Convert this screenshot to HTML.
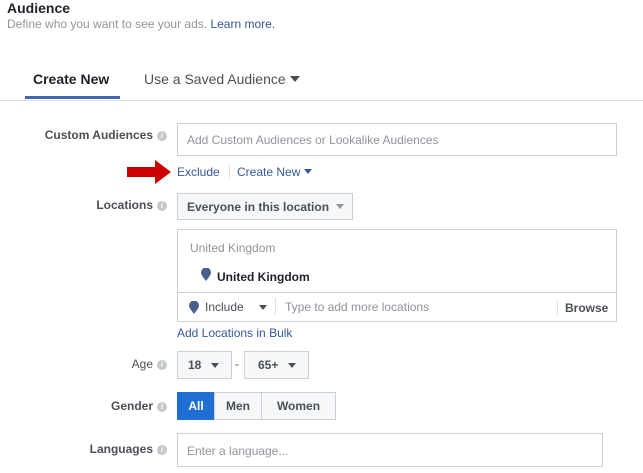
<!DOCTYPE html><html><head><style>
body{margin:0;width:643px;height:473px;background:#fff;font-family:"Liberation Sans",sans-serif;position:relative;overflow:hidden;color:#1d2129}
.a{position:absolute;white-space:nowrap}
.lbl{position:absolute;right:476px;font-size:12px;font-weight:bold;color:#4b4f56}
.i{display:inline-block;width:10px;height:10px;border-radius:50%;background:#c4c7cc;color:#fff;font-size:8px;line-height:10px;text-align:center;vertical-align:1px;margin-left:4px;font-style:italic;font-family:"Liberation Serif",serif;font-weight:bold}
.box{position:absolute;border:1px solid #ccd0d5;box-sizing:border-box;background:#fff}
.btn{position:absolute;border:1px solid #ccd0d5;box-sizing:border-box;background:#f6f7f9;font-size:12px;font-weight:bold;color:#4b4f56;display:flex;align-items:center}
.tri{display:inline-block;width:0;height:0;border-left:4px solid transparent;border-right:4px solid transparent;border-top:5px solid #4b4f56;vertical-align:2px}
.link{color:#365899;font-size:12px}
.ph{color:#90949c;font-size:12px}
</style></head><body>
<div class="a" style="left:7px;top:0px;font-size:14px;font-weight:bold">Audience</div>
<div class="a" style="left:7px;top:17px;font-size:12px;color:#90949c">Define who you want to see your ads. <span class="link">Learn more.</span></div>
<div class="a" style="left:33px;top:71px;font-size:14px;font-weight:bold">Create New</div>
<div class="a" style="left:25px;top:96px;width:95px;height:3px;background:#4267b2"></div>
<div class="a" style="left:144px;top:71px;font-size:14px;color:#4b4f56">Use a Saved Audience <span class="tri" style="border-top-color:#4b4f56;border-left-width:5px;border-right-width:5px;border-top-width:6px"></span></div>
<div class="a" style="left:0;top:100px;width:643px;height:1px;background:#dddfe2"></div>

<div class="lbl" style="top:128px">Custom Audiences<span class="i">i</span></div>
<div class="box" style="left:177px;top:123px;width:440px;height:33px"><span class="a ph" style="left:9px;top:9px">Add Custom Audiences or Lookalike Audiences</span></div>
<svg class="a" style="left:126px;top:159px" width="46" height="26"><path d="M1 8H29V1L45 13L29 25V18H1Z" fill="#c00"/></svg>
<div class="a link" style="left:177px;top:165px">Exclude</div>
<div class="a" style="left:229px;top:165px;width:1px;height:13px;background:#dddfe2"></div>
<div class="a link" style="left:237px;top:165px">Create New <span class="tri" style="border-top-color:#365899"></span></div>

<div class="lbl" style="top:198px">Locations<span class="i">i</span></div>
<div class="btn" style="left:177px;top:193px;width:176px;height:27px;padding-left:9px">Everyone in this location&nbsp;&nbsp;<span class="tri" style="border-top-color:#90949c"></span></div>
<div class="box" style="left:177px;top:229px;width:440px;height:64px">
<span class="a ph" style="left:12px;top:11px">United Kingdom</span>
<svg class="a" style="left:23px;top:38px" width="10" height="13"><path d="M5 13C1 8 0 6 0 4.5A5 5 0 0 1 10 4.5C10 6 9 8 5 13Z" fill="#4b5e8c"/></svg>
<span class="a" style="left:39px;top:40px;font-size:12px;font-weight:bold">United Kingdom</span></div>
<div class="box" style="left:177px;top:292px;width:440px;height:30px">
<svg class="a" style="left:11px;top:8px" width="10" height="13"><path d="M5 13C1 8 0 6 0 4.5A5 5 0 0 1 10 4.5C10 6 9 8 5 13Z" fill="#4b5e8c"/></svg>
<span class="a" style="left:27px;top:7px;font-size:12px;color:#4b4f56">Include</span>
<span class="a" style="left:81px;top:12px;width:0;height:0;border-left:4px solid transparent;border-right:4px solid transparent;border-top:5px solid #4b4f56"></span>
<span class="a" style="left:97px;top:5px;width:1px;height:17px;background:#dddfe2"></span>
<span class="a ph" style="left:107px;top:7px">Type to add more locations</span>
<span class="a" style="left:379px;top:8px;width:1px;height:14px;background:#dddfe2"></span>
<span class="a" style="left:387px;top:8px;font-size:12px;font-weight:bold;color:#4b4f56">Browse</span></div>
<div class="a link" style="left:177px;top:326px">Add Locations in Bulk</div>

<div class="lbl" style="top:357px;font-weight:normal;color:#4b4f56">Age<span class="i">i</span></div>
<div class="btn" style="left:177px;top:351px;width:55px;height:28px;padding-left:10px">18&nbsp;&nbsp;&nbsp;<span class="tri"></span></div>
<div class="a" style="left:235px;top:357px;font-size:12px;color:#4b4f56">-</div>
<div class="btn" style="left:244px;top:351px;width:65px;height:28px;padding-left:13px">65+&nbsp;&nbsp;&nbsp;<span class="tri"></span></div>

<div class="lbl" style="top:399px">Gender<span class="i">i</span></div>
<div class="btn" style="left:177px;top:392px;width:38px;height:28px;background:#1f6ed4;border-color:#1f6ed4;color:#fff;justify-content:center">All</div>
<div class="btn" style="left:214px;top:392px;width:48px;height:28px;justify-content:center">Men</div>
<div class="btn" style="left:261px;top:392px;width:75px;height:28px;justify-content:center">Women</div>

<div class="lbl" style="top:442px">Languages<span class="i">i</span></div>
<div class="box" style="left:177px;top:433px;width:426px;height:34px"><span class="a ph" style="left:9px;top:10px">Enter a language...</span></div>
</body></html>
